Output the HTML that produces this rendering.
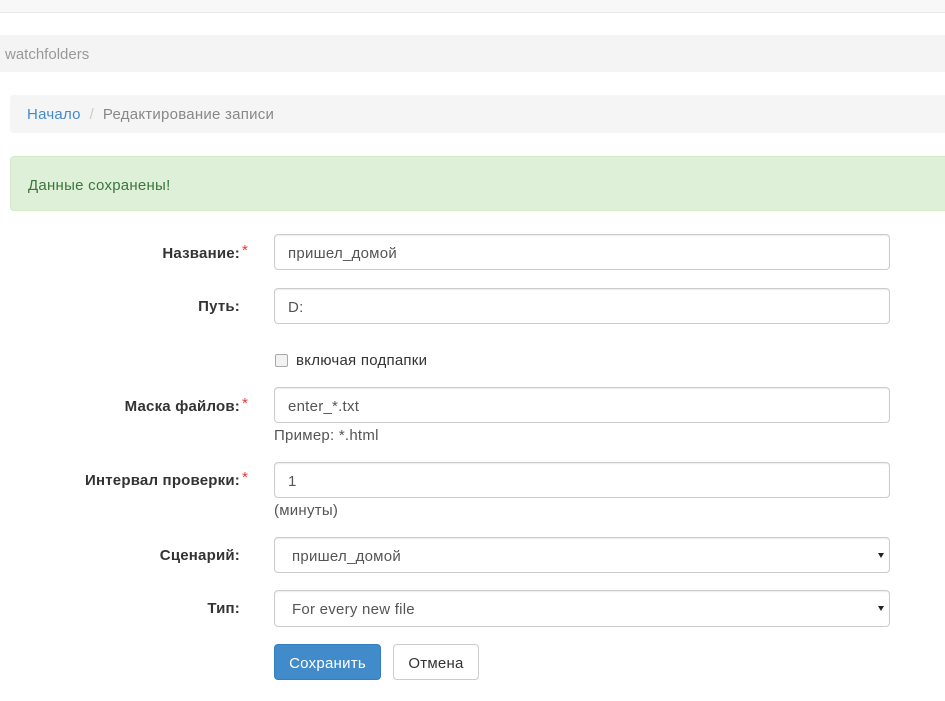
<!DOCTYPE html>
<html><head><meta charset="utf-8"><style>
body{margin:0;width:945px;height:701px;overflow:hidden;background:#fff;font-family:"Liberation Sans",Arial,sans-serif;font-size:15px;letter-spacing:0.25px;color:#333;position:relative}
.a{position:absolute}
.top{left:0;top:0;width:945px;height:12px;background:#f8f8f8;border-bottom:1px solid #e7e7e7}
.nav{left:0;top:35px;width:945px;height:37px;background:#f4f4f4;color:#999;font-size:15px;line-height:39px;padding-left:5px;box-sizing:border-box;letter-spacing:0}
.bc{left:10px;top:95px;width:935px;height:38px;background:#f5f5f5;border-radius:4px 0 0 4px;line-height:40px;padding-left:17px;box-sizing:border-box;color:#888}
.bc a{color:#428bca}
.al{left:10px;top:156px;width:940px;height:55px;background:#dff0d8;border:1px solid #d6e9c6;border-radius:4px;box-sizing:border-box;color:#3c763d;line-height:57px;padding-left:17px}
.lb{right:705px;font-weight:bold;text-align:right;white-space:nowrap;letter-spacing:0.2px}
.lb i{color:#e33;font-style:normal;font-weight:normal;position:absolute;right:-8px;top:-3px}
.in{left:274px;width:616px;height:36px;border:1px solid #ccc;border-radius:4px;box-sizing:border-box;padding-left:13px;line-height:37px;color:#555;box-shadow:inset 0 1px 1px rgba(0,0,0,.075)}
.sel{padding-left:17px}
.sel:after{content:"";position:absolute;right:5px;top:15px;border-left:3.5px solid transparent;border-right:3.5px solid transparent;border-top:5px solid #222}
.hint{left:274px;color:#555}
.btn{top:644px;height:36px;border-radius:4px;box-sizing:border-box;line-height:37px;text-align:center}
</style></head><body>
<div class="a top"></div>
<div class="a nav">watchfolders</div>
<div class="a bc"><a>Начало</a>&nbsp;&nbsp;<span style="color:#ccc">/</span>&nbsp;&nbsp;Редактирование записи</div>
<div class="a al">Данные сохранены!</div>

<div class="a lb" style="top:245px">Название:<i>*</i></div>
<div class="a in" style="top:234px">пришел_домой</div>
<div class="a lb" style="top:298px">Путь:</div>
<div class="a in" style="top:288px">D:</div>
<div class="a" style="left:275px;top:354px;width:11px;height:11px;border:1px solid #aaa;border-radius:2px;background:#f2f2f2"></div>
<div class="a" style="left:296px;top:352px">включая подпапки</div>
<div class="a lb" style="top:398px">Маска файлов:<i>*</i></div>
<div class="a in" style="top:387px">enter_*.txt</div>
<div class="a hint" style="top:427px">Пример: *.html</div>
<div class="a lb" style="top:472px">Интервал проверки:<i>*</i></div>
<div class="a in" style="top:462px">1</div>
<div class="a hint" style="top:502px">(минуты)</div>
<div class="a lb" style="top:547px">Сценарий:</div>
<div class="a in sel" style="top:537px">пришел_домой</div>
<div class="a lb" style="top:600px">Тип:</div>
<div class="a in sel" style="top:590px;height:37px">For every new file</div>
<div class="a btn" style="left:274px;width:107px;background:#428bca;border:1px solid #357ebd;color:#fff">Сохранить</div>
<div class="a btn" style="left:393px;width:86px;background:#fff;border:1px solid #ccc;color:#333">Отмена</div>
</body></html>
